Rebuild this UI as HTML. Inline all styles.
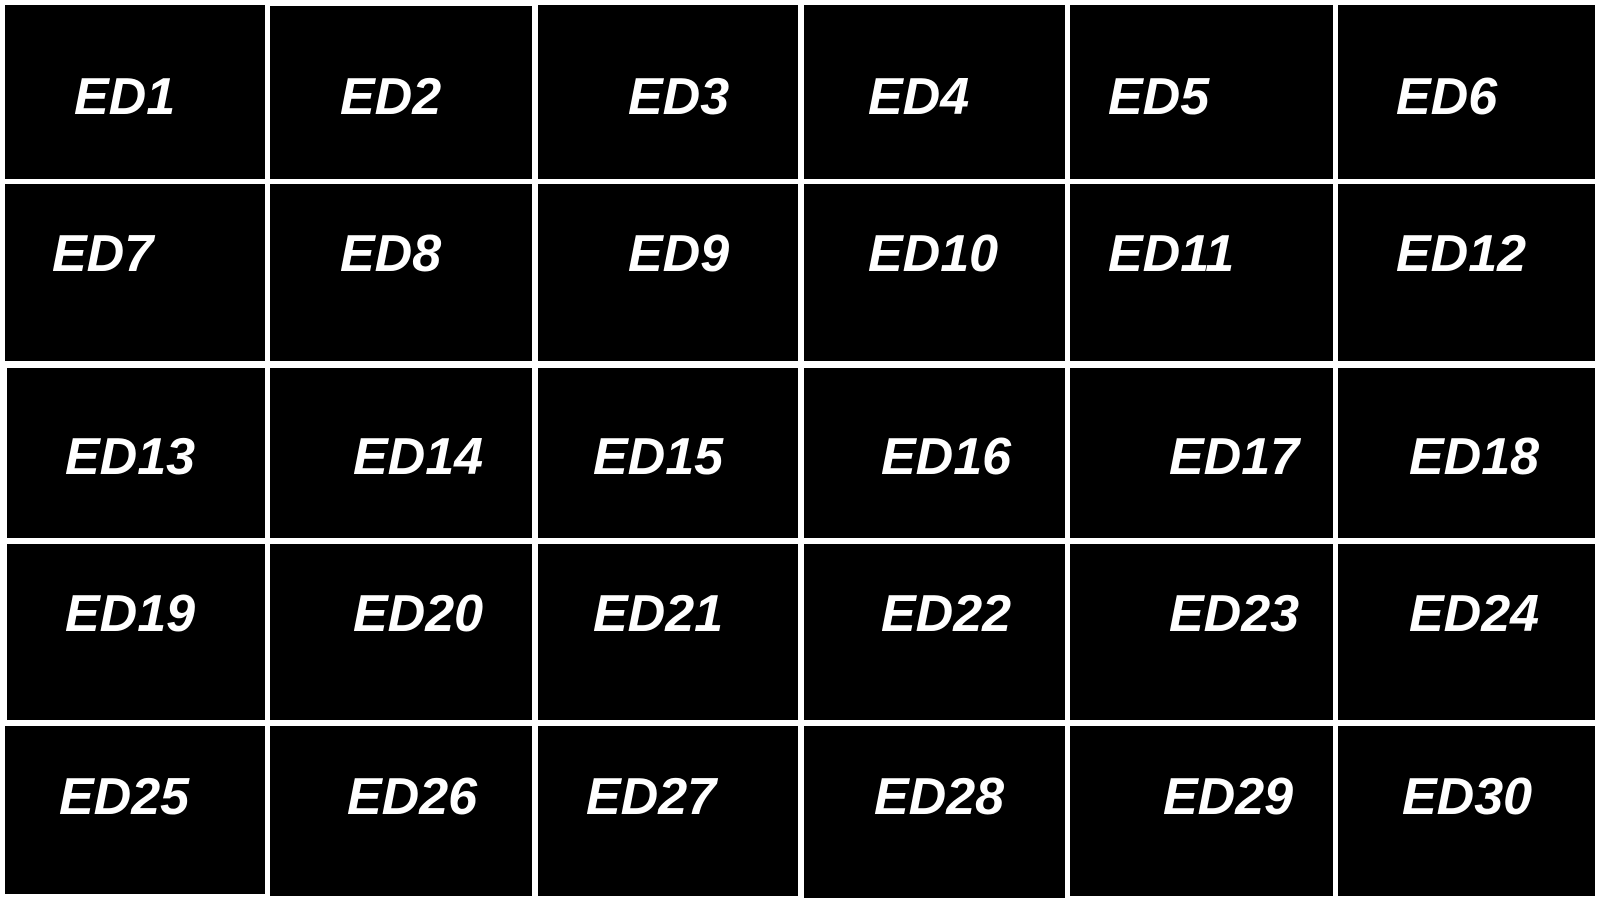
<!DOCTYPE html>
<html><head><style>
html,body{margin:0;padding:0;background:#fff;width:1600px;height:900px;overflow:hidden;position:relative}
.b{position:absolute;background:#000}
.t{position:absolute;color:#fff;font-family:"Liberation Sans",sans-serif;font-weight:bold;font-style:italic;font-size:52px;line-height:52px;white-space:nowrap;transform:scaleX(1.0);transform-origin:left top}
</style></head><body>
<div class="b" style="left:5px;top:5px;width:260px;height:174px"></div>
<div class="b" style="left:270px;top:6px;width:262px;height:173px"></div>
<div class="b" style="left:538px;top:5px;width:260px;height:174px"></div>
<div class="b" style="left:804px;top:5px;width:261px;height:174px"></div>
<div class="b" style="left:1070px;top:5px;width:263px;height:174px"></div>
<div class="b" style="left:1338px;top:5px;width:257px;height:174px"></div>

<div class="b" style="left:5px;top:184px;width:260px;height:177px"></div>
<div class="b" style="left:270px;top:184px;width:262px;height:177px"></div>
<div class="b" style="left:538px;top:184px;width:260px;height:177px"></div>
<div class="b" style="left:804px;top:184px;width:261px;height:177px"></div>
<div class="b" style="left:1070px;top:184px;width:263px;height:177px"></div>
<div class="b" style="left:1338px;top:184px;width:257px;height:177px"></div>

<div class="b" style="left:7px;top:368px;width:258px;height:170px"></div>
<div class="b" style="left:270px;top:368px;width:262px;height:170px"></div>
<div class="b" style="left:538px;top:368px;width:260px;height:170px"></div>
<div class="b" style="left:804px;top:368px;width:261px;height:170px"></div>
<div class="b" style="left:1070px;top:368px;width:263px;height:170px"></div>
<div class="b" style="left:1338px;top:368px;width:257px;height:170px"></div>

<div class="b" style="left:7px;top:544px;width:258px;height:176px"></div>
<div class="b" style="left:270px;top:544px;width:262px;height:176px"></div>
<div class="b" style="left:538px;top:544px;width:260px;height:176px"></div>
<div class="b" style="left:804px;top:544px;width:261px;height:176px"></div>
<div class="b" style="left:1070px;top:544px;width:263px;height:176px"></div>
<div class="b" style="left:1338px;top:544px;width:257px;height:176px"></div>

<div class="b" style="left:5px;top:726px;width:260px;height:168px"></div>
<div class="b" style="left:270px;top:726px;width:262px;height:170px"></div>
<div class="b" style="left:538px;top:726px;width:260px;height:170px"></div>
<div class="b" style="left:804px;top:726px;width:261px;height:172px"></div>
<div class="b" style="left:1070px;top:726px;width:263px;height:170px"></div>
<div class="b" style="left:1338px;top:726px;width:257px;height:170px"></div>

<div class="t" style="left:74px;top:71px">ED1</div>
<div class="t" style="left:340px;top:71px">ED2</div>
<div class="t" style="left:628px;top:71px">ED3</div>
<div class="t" style="left:868px;top:71px">ED4</div>
<div class="t" style="left:1108px;top:71px">ED5</div>
<div class="t" style="left:1396px;top:71px">ED6</div>

<div class="t" style="left:52px;top:228px">ED7</div>
<div class="t" style="left:340px;top:228px">ED8</div>
<div class="t" style="left:628px;top:228px">ED9</div>
<div class="t" style="left:868px;top:228px">ED10</div>
<div class="t" style="left:1108px;top:228px">ED11</div>
<div class="t" style="left:1396px;top:228px">ED12</div>

<div class="t" style="left:65px;top:431px">ED13</div>
<div class="t" style="left:353px;top:431px">ED14</div>
<div class="t" style="left:593px;top:431px">ED15</div>
<div class="t" style="left:881px;top:431px">ED16</div>
<div class="t" style="left:1169px;top:431px">ED17</div>
<div class="t" style="left:1409px;top:431px">ED18</div>

<div class="t" style="left:65px;top:588px">ED19</div>
<div class="t" style="left:353px;top:588px">ED20</div>
<div class="t" style="left:593px;top:588px">ED21</div>
<div class="t" style="left:881px;top:588px">ED22</div>
<div class="t" style="left:1169px;top:588px">ED23</div>
<div class="t" style="left:1409px;top:588px">ED24</div>

<div class="t" style="left:59px;top:771px">ED25</div>
<div class="t" style="left:347px;top:771px">ED26</div>
<div class="t" style="left:586px;top:771px">ED27</div>
<div class="t" style="left:874px;top:771px">ED28</div>
<div class="t" style="left:1163px;top:771px">ED29</div>
<div class="t" style="left:1402px;top:771px">ED30</div>
</body></html>
